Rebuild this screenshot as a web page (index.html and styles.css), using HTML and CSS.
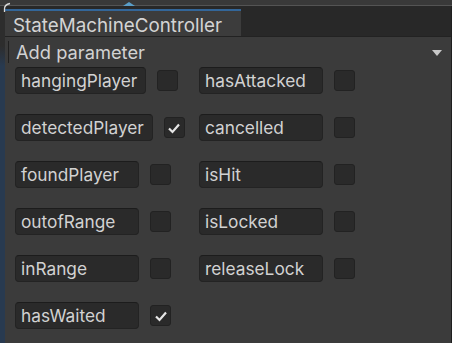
FILE: index.html
```html
<!DOCTYPE html>
<html>
<head>
<meta charset="utf-8">
<link rel="stylesheet" href="styles.css">
</head>
<body>
<div class="topstrip">
  <svg class="arc" width="20" height="12" viewBox="0 0 20 12"><path d="M4.5 12 V9 Q4.5 4.5 10 3.5" fill="none" stroke="#d8d8d8" stroke-width="1.3"/></svg>
  <span class="blip"></span>
</div>
<div class="main">
  <div class="scene"></div>
  <div class="window">
    <div class="tabbar">
      <div class="tab">StateMachineController</div>
    </div>
    <div class="content">
      <div class="addrow">
        <span class="bar"></span>
        <span class="addlabel">Add parameter</span>
        <span class="tri"></span>
      </div>
      <div class="params">
        <div class="cell"><span class="field">hangingPlayer</span><span class="check"></span></div>
        <div class="cell"><span class="field">hasAttacked</span><span class="check"></span></div>
        <div class="cell"><span class="field">detectedPlayer</span><span class="check on"><svg width="14" height="12" viewBox="0 0 14 12"><path d="M2 6.5 L5.5 10 L12 2.5" fill="none" stroke="#e6e6e6" stroke-width="2.2"/></svg></span></div>
        <div class="cell"><span class="field">cancelled</span><span class="check"></span></div>
        <div class="cell"><span class="field">foundPlayer</span><span class="check"></span></div>
        <div class="cell"><span class="field">isHit</span><span class="check"></span></div>
        <div class="cell"><span class="field">outofRange</span><span class="check"></span></div>
        <div class="cell"><span class="field">isLocked</span><span class="check"></span></div>
        <div class="cell"><span class="field">inRange</span><span class="check"></span></div>
        <div class="cell"><span class="field">releaseLock</span><span class="check"></span></div>
        <div class="cell"><span class="field">hasWaited</span><span class="check on"><svg width="14" height="12" viewBox="0 0 14 12"><path d="M2 6.5 L5.5 10 L12 2.5" fill="none" stroke="#e6e6e6" stroke-width="2.2"/></svg></span></div>
      </div>
    </div>
  </div>
</div>
</body>
</html>
```

FILE: styles.css
```css
html, body {
  margin: 0;
  padding: 0;
}
body {
  width: 452px;
  height: 343px;
  overflow: hidden;
  background: #383838;
  font-family: Inter, "Noto Sans", sans-serif;
  color: #d2d2d2;
}
.topstrip {
  position: relative;
  height: 5px;
  background: #393939;
  border-bottom: 1px solid #545454;
}
.arc {
  position: absolute;
  left: 0;
  top: 0;
}
.blip {
  position: absolute;
  left: 123px;
  top: 2px;
  width: 0;
  height: 0;
  border-left: 6px solid transparent;
  border-right: 6px solid transparent;
  border-bottom: 4px solid #5a9ec8;
}
.main {
  display: flex;
  height: 337px;
}
.scene {
  width: 5px;
  flex: none;
  background: linear-gradient(#2d2d2d 0, #2d2d2d 40px, #283a50 60px, #283a50 100%);
}
.window {
  flex: 1;
  display: flex;
  flex-direction: column;
  border-right: 1px solid #1f1f1f;
}
.tabbar {
  height: 30px;
  background: #282828;
  border-bottom: 1px solid #222222;
  display: flex;
  align-items: flex-end;
}
.tab {
  width: 228px;
  height: 25px;
  background: #3c3c3c;
  border-top: 2px solid #336699;
  padding-left: 8px;
  font-size: 18.8px;
  line-height: 29px;
  color: #d4d4d4;
  white-space: nowrap;
  overflow: hidden;
}
.content {
  flex: 1;
  background: #3b3b3b;
}
.addrow {
  height: 30px;
  display: flex;
  align-items: center;
  position: relative;
}
.bar {
  width: 1px;
  height: 22px;
  background: #202020;
  margin-left: 3px;
}
.addlabel {
  margin-left: 7px;
  font-size: 18.3px;
  color: #d2d2d2;
  flex: 1;
}
.tri {
  width: 0;
  height: 0;
  border-left: 5px solid transparent;
  border-right: 5px solid transparent;
  border-top: 6px solid #c8c8c8;
  margin-right: 9px;
  margin-top: 2px;
}
.params {
  display: grid;
  grid-template-columns: 184px auto;
  row-gap: 20px;
  padding-left: 10px;
}
.cell {
  display: flex;
  align-items: center;
  height: 27px;
}
.field {
  box-sizing: border-box;
  min-width: 124px;
  height: 27px;
  padding: 0 8px 0 5px;
  background: #2a2a2a;
  border: 1px solid #232323;
  border-top-color: #1c1c1c;
  border-radius: 4px;
  font-size: 17.3px;
  line-height: 26px;
  color: #d2d2d2;
  white-space: nowrap;
}
.check {
  box-sizing: border-box;
  width: 21px;
  height: 21px;
  margin-left: 11px;
  background: #2a2a2a;
  border: 1px solid #222222;
  border-radius: 3px;
  display: flex;
  align-items: center;
  justify-content: center;
}
```
